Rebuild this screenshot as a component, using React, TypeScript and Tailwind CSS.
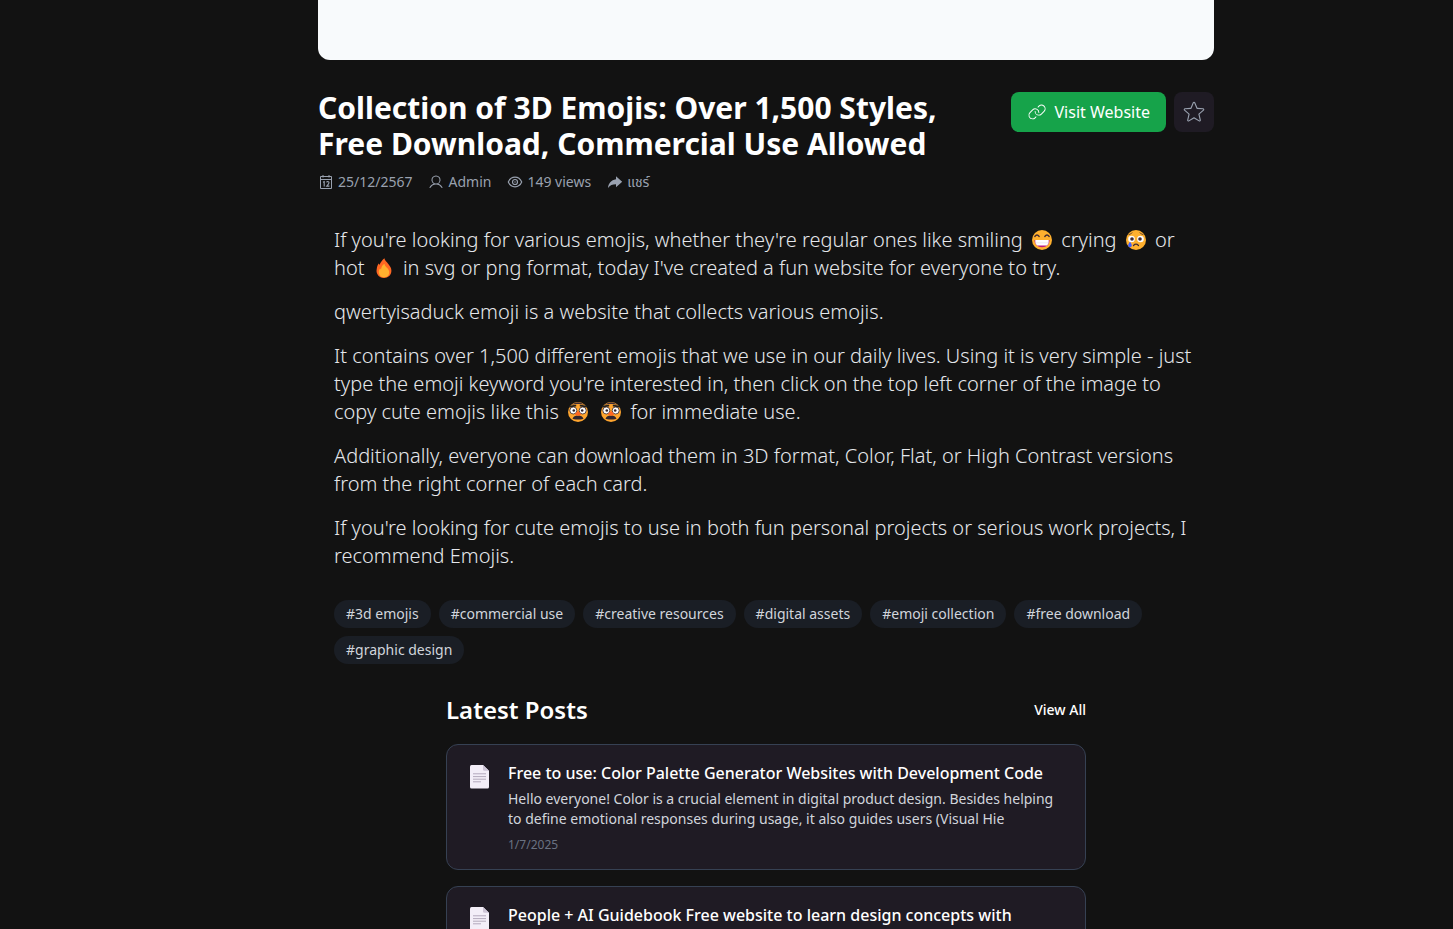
import React from 'react';
import { PiLinkLight, PiStarLight, PiUser } from 'react-icons/pi';

const tags = [
    '#3d emojis',
    '#commercial use',
    '#creative resources',
    '#digital assets',
    '#emoji collection',
    '#free download',
    '#graphic design',
];

const posts = [
    {
        title: 'Free to use: Color Palette Generator Websites with Development Code',
        excerpt: 'Hello everyone! Color is a crucial element in digital product design. Besides helping to define emotional responses during usage, it also guides users (Visual Hie',
        date: '1/7/2025',
    },
    {
        title: 'People + AI Guidebook Free website to learn design concepts with',
        excerpt: '',
        date: '',
    },
];

function Emoji({ label, children }: { label: string; children: React.ReactNode }) {
    return (
        <svg viewBox="0 0 28 20" role="img" aria-label={label} className="inline-block w-7 h-5 align-text-bottom mb-[3px]">
            {children}
        </svg>
    );
}

function SmilingEmoji() {
    return (
        <Emoji label="smiling">
            <circle cx="14" cy="10" r="10" fill="#ffb02e" />
            <path d="M6.8 6.5Q9 3.5 11.2 6.5M16.8 6.5Q19 3.5 21.2 6.5" fill="none" stroke="#402a32" strokeWidth="1.3" strokeLinecap="round" />
            <path d="M6.5 10H21.5C21.5 14.5 18.5 17.2 14 17.2S6.5 14.5 6.5 10Z" fill="#bb1d80" />
            <path d="M7.3 10H20.7V12Q20.5 14.5 19 15.5H9Q7.5 14.5 7.3 12Z" fill="#fff" />
            <path d="M7.5 12.8H20.5" stroke="#e3dfe8" strokeWidth="0.6" />
        </Emoji>
    );
}

function CryingEmoji() {
    return (
        <Emoji label="crying">
            <circle cx="14" cy="10" r="10" fill="#ffb02e" />
            <circle cx="9.5" cy="9" r="3.3" fill="#fff" />
            <circle cx="18.5" cy="9" r="3.3" fill="#fff" />
            <circle cx="10" cy="9" r="1.8" fill="#402a32" />
            <circle cx="18" cy="9" r="1.8" fill="#402a32" />
            <path d="M7 4.6Q9 4.4 10 2.8M21 4.6Q19 4.4 18 2.8" fill="none" stroke="#402a32" strokeWidth="0.8" strokeLinecap="round" />
            <path d="M11.5 15.5Q14 13 16.5 15.5" fill="none" stroke="#402a32" strokeWidth="1.2" strokeLinecap="round" />
            <path d="M8 11.8C9 13.3 9.8 14.3 9.8 15.5A1.8 1.8 0 0 1 6.2 15.5C6.2 14.3 7 13.3 8 11.8Z" fill="#3f5fff" />
        </Emoji>
    );
}

function FireEmoji() {
    return (
        <Emoji label="fire">
            <path d="M6.8 10.5C7 8.5 8 6.5 8.8 5.6C9.2 6 9.3 6.5 9.5 6.9C10.5 4.6 12.5 1.5 14.4 0.2C14.6 2.5 17 4 18.3 6C20.2 8.4 21.4 10 21.4 12.7C21.4 17 18 19.9 14 19.9C9.8 19.9 6.5 16.8 6.5 12.7Z" fill="#ff6723" />
            <path d="M8.8 14C8.8 12 9.5 11 10.2 10.4C10.4 10.9 10.7 11.2 11 11.4C11.3 9 12.5 6.7 14.5 5.7C14.7 8 16.2 8.8 17.3 10C18.4 11.2 19.2 12.5 19.2 14.4C19.2 17.5 16.8 19.3 14 19.3C11 19.3 8.8 17 8.8 14Z" fill="#ffb02e" />
        </Emoji>
    );
}

function DisguisedEmoji() {
    return (
        <Emoji label="disguised">
            <circle cx="14" cy="10" r="10" fill="#ffa52e" />
            <path d="M7.5 2.8Q14 -2.4 20.5 2.8Q14 1.2 7.5 2.8Z" fill="#3d2c35" />
            <path d="M5.6 4.6L11.5 3.6M16.5 3.6L22.4 4.6" stroke="#212121" strokeWidth="1.6" strokeLinecap="round" />
            <circle cx="9.3" cy="8.5" r="3.5" fill="#fff" stroke="#32252c" strokeWidth="0.8" />
            <circle cx="18.7" cy="8.5" r="3.5" fill="#fff" stroke="#32252c" strokeWidth="0.8" />
            <circle cx="9.8" cy="8.5" r="1.3" fill="#32252c" />
            <circle cx="18.2" cy="8.5" r="1.3" fill="#32252c" />
            <path d="M14 8.8C15 10 17 11.2 17 12.8Q14 14.5 11 12.8C11 11.2 13 10 14 8.8Z" fill="#ff6723" />
            <path d="M14 14C16 13.2 18.5 13.6 19.5 16.8C17.5 17.8 15.5 17.4 14 17.4S10.5 17.8 8.5 16.8C9.5 13.6 12 13.2 14 14Z" fill="#32252c" />
        </Emoji>
    );
}

function CalendarIcon() {
    return (
        <svg viewBox="0 0 16 16" aria-hidden="true" className="w-4 h-4" fill="none" stroke="currentColor">
            <path d="M2.5 2.5H13.5V14.5H2.5ZM2.5 5.5H13.5" />
            <path d="M5 1V3.5M11 1V3.5" />
            <path d="M5 8.3L6.2 7.6V12.6M8.6 8.4Q8.8 7.5 9.8 7.5Q11 7.5 11 8.7Q11 9.5 8.8 12.1H11.4" strokeWidth="1.1" />
        </svg>
    );
}

function EyeIcon() {
    return (
        <svg viewBox="0 0 16 16" aria-hidden="true" className="w-4 h-4" fill="none" stroke="currentColor" strokeWidth="1.2">
            <path d="M1.3 8C2.6 5 5 3.2 8 3.2S13.4 5 14.7 8C13.4 11 11 12.8 8 12.8S2.6 11 1.3 8Z" />
            <circle cx="8" cy="8" r="2.5" />
            <circle cx="8" cy="8" r="0.7" fill="currentColor" stroke="none" />
        </svg>
    );
}

function ShareIcon() {
    return (
        <svg viewBox="0 0 16 16" aria-hidden="true" className="w-4 h-4" fill="currentColor">
            <path d="M9 2.2L15.2 7.8L9 13.2V10.2C5.4 10.2 3 11.2 1 14C1.4 9.6 4 6 9 5.3Z" />
        </svg>
    );
}

function DocumentIcon() {
    return (
        <svg viewBox="0 0 29 32" aria-hidden="true" className="w-[29px] h-8 shrink-0">
            <path d="M8.5 4H20L26 9.8V26Q26 27.5 24.5 27.5H8.5Q7 27.5 7 26V5.5Q7 4 8.5 4Z" fill="#f3eef8" />
            <path d="M20 4L26 9.8H21.5Q20 9.8 20 8.3Z" fill="#cdc4d6" />
            <path d="M10 12.8H23M10 15.6H23M10 18.2H23M10 20.8H18" stroke="#aba1b5" strokeWidth="0.9" />
        </svg>
    );
}

export default function App() {
    return (
        <div className="h-screen overflow-hidden bg-[#121212] pl-[79px] font-['Noto_Sans','Noto_Sans_Thai',sans-serif] text-white">
            <main className="max-w-4xl mx-auto">
                <div className="h-15 rounded-b-xl bg-[#f8fafc]" />

                <header className="pt-8 flex items-start justify-between gap-4">
                    <div className="flex-1">
                        <h1 className="text-3xl font-bold -mt-0.5">
                            Collection of 3D Emojis: Over 1,500 Styles, Free Download, Commercial Use Allowed
                        </h1>
                        <div className="mt-2.5 flex items-center gap-4 text-sm text-gray-400">
                            <span className="flex items-center gap-1"><CalendarIcon />25/12/2567</span>
                            <span className="flex items-center gap-1"><PiUser size={16} />Admin</span>
                            <span className="flex items-center gap-1"><EyeIcon />149 views</span>
                            <button className="flex items-center gap-1"><ShareIcon />แชร์</button>
                        </div>
                    </div>
                    <div className="flex gap-2">
                        <a href="#visit" className="h-10 px-4 flex items-center gap-2 rounded-lg bg-[#16a34a]">
                            <PiLinkLight size={20} />
                            Visit Website
                        </a>
                        <button aria-label="Favorite" className="w-10 h-10 flex items-center justify-center rounded-lg bg-[#1f1b24] text-gray-400">
                            <PiStarLight size={24} />
                        </button>
                    </div>
                </header>

                <article className="mt-4.5 px-4 pt-4 space-y-4 text-xl leading-7 font-light text-gray-200">
                    <p>
                        If you're looking for various emojis, whether they're regular ones like smiling <SmilingEmoji /> crying <CryingEmoji /> or hot <FireEmoji /> in svg or png format, today I've created a fun website for everyone to try.
                    </p>
                    <p>qwertyisaduck emoji is a website that collects various emojis.</p>
                    <p>
                        It contains over 1,500 different emojis that we use in our daily lives. Using it is very simple - just type the emoji keyword you're interested in, then click on the top left corner of the image to copy cute emojis like this <DisguisedEmoji /> <DisguisedEmoji /> for immediate use.
                    </p>
                    <p>
                        Additionally, everyone can download them in 3D format, Color, Flat, or High Contrast versions from the right corner of each card.
                    </p>
                    <p>
                        If you're looking for cute emojis to use in both fun personal projects or serious work projects, I recommend Emojis.
                    </p>
                </article>

                <div className="mt-7.5 px-4 flex flex-wrap gap-2">
                    {tags.map(tag => (
                        <a key={tag} href="#tag" className="px-3 py-1 rounded-full bg-[#1a1e25] text-sm text-gray-300">
                            {tag}
                        </a>
                    ))}
                </div>

                <section className="mt-7.5 max-w-2xl mx-auto px-4">
                    <div className="mb-4.5 flex items-center justify-between">
                        <h2 className="text-2xl font-semibold">Latest Posts</h2>
                        <a href="#posts" className="text-sm font-medium">View All</a>
                    </div>
                    <div className="space-y-4">
                        {posts.map(post => (
                            <a key={post.title} href="#post" className="flex gap-4 p-4 rounded-xl border border-gray-700 bg-[#1f1b24]">
                                <DocumentIcon />
                                <div className="flex-1">
                                    <h3 className="font-medium">{post.title}</h3>
                                    <p className="mt-1 text-sm text-gray-300">{post.excerpt}</p>
                                    <p className="mt-2 text-xs text-gray-500">{post.date}</p>
                                </div>
                            </a>
                        ))}
                    </div>
                </section>
            </main>
        </div>
    );
}
